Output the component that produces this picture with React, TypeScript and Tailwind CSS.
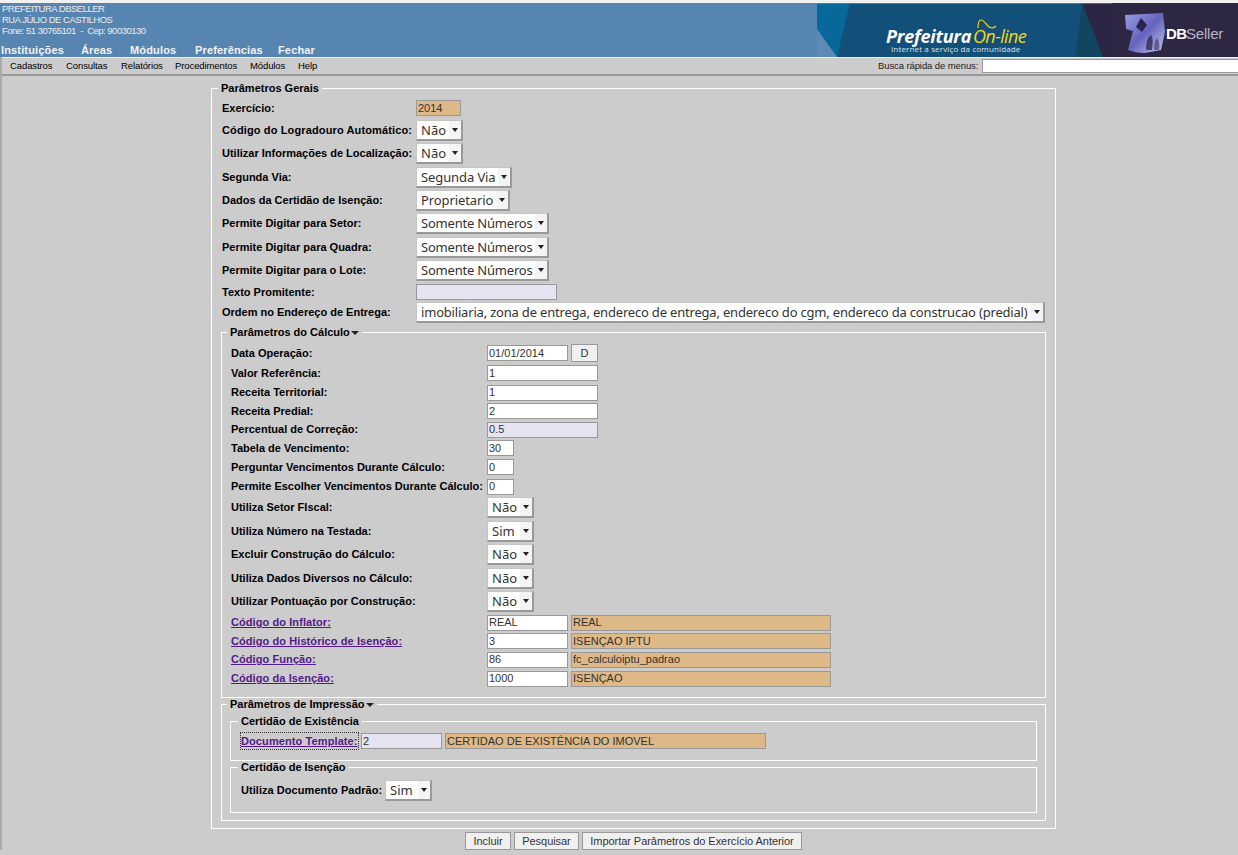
import type { ReactNode } from "react";

const sans = "font-['Liberation_Sans',Arial,sans-serif]";

function Arrow() {
  return (
    <span className="pointer-events-none absolute inset-y-0 right-0 flex w-[12px] items-center justify-center bg-[#f4f4f4]">
      <svg width="6" height="4" viewBox="0 0 6 4">
        <path d="M0 0h6L3 4z" fill="#222" />
      </svg>
    </span>
  );
}

function Select({ value, width, track = "" }: { value: string; width: string; track?: string }) {
  return (
    <span className={`relative inline-block h-[21px] ${width} border-t border-l border-[#c4c4c4] border-r-2 border-b-2 border-r-[#999] border-b-[#999] bg-white`}>
      <select
        defaultValue={value}
        className={`block h-full w-full appearance-none bg-white pl-1 font-['Noto_Sans',sans-serif] text-[13px] leading-[19px] text-[#333] outline-none ${track}`}
      >
        <option>{value}</option>
      </select>
      <Arrow />
    </span>
  );
}

function Input({ value = "", width, tone = "white" }: { value?: string; width: string; tone?: "white" | "lilac" | "tan" }) {
  const bg = tone === "white" ? "bg-white" : tone === "lilac" ? "bg-[#e6e4f1]" : "bg-[#deb887]";
  return (
    <input
      readOnly
      value={value}
      className={`block h-[16px] ${width} border border-[#999] ${bg} px-px ${sans} text-[11px] text-[#333] outline-none`}
    />
  );
}

function Row({ label, height, labelWidth, link, track = "", children }: { label: string; height: string; labelWidth: string; link?: boolean; track?: string; children: ReactNode }) {
  return (
    <div className={`flex items-center ${height}`}>
      <div className={`${labelWidth} shrink-0 text-[11px] font-bold ${track} ${link ? "tracking-[0.08px] text-[#551a8b] underline" : "text-black"}`}>{label}</div>
      <div className="flex items-center gap-[3px]">{children}</div>
    </div>
  );
}

function Legend({ children, caret, className }: { children: ReactNode; caret?: boolean; className: string }) {
  return (
    <legend className={`${className} px-[3px] text-[11px] leading-[13px] font-bold text-black`}>
      {children}
      {caret && (
        <svg width="8" height="4" viewBox="0 0 8 4" className="ml-px inline-block align-middle">
          <path d="M0 0h8L4 4z" fill="#222" />
        </svg>
      )}
    </legend>
  );
}

function Banner() {
  return (
    <svg width="421" height="54" viewBox="817 3 421 54" className="shrink-0">
      <defs>
        <linearGradient id="cube" x1="0" y1="0" x2="1" y2="1">
          <stop offset="0" stopColor="#9a9de2" />
          <stop offset="0.5" stopColor="#6464bc" />
          <stop offset="1" stopColor="#c5c8ee" />
        </linearGradient>
      </defs>
      <rect x="817" y="3" width="421" height="54" fill="#12507a" />
      <path d="M817 3h33l-13 54h-20z" fill="#06699a" />
      <path d="M817 29l20 28h-20z" fill="#5e8ab5" />
      <path d="M1082 3l21 54h-27z" fill="#124560" />
      <path d="M1082 3h156v54h-135z" fill="#2c2544" />
      <rect x="1112" y="3" width="126" height="54" fill="#2d2743" />
      <rect x="817" y="3" width="295" height="1" fill="#6a94bd" opacity="0.6" />
      <text x="886" y="43" fill="#fff" fontFamily="'Open Sans',sans-serif" fontSize="18" fontStyle="italic" fontWeight="700" letterSpacing="-0.2">Prefeitura</text>
      <text x="973" y="43" fill="#f2d70b" fontFamily="'Open Sans',sans-serif" fontSize="18" fontStyle="italic" fontWeight="400" letterSpacing="-0.6">On-line</text>
      <path d="M978 28c0-5 1-8 3-8 4 0 6 8 11 8 2 0 3-1 4-2" fill="none" stroke="#f2d70b" strokeWidth="1.2" />
      <text x="891" y="52" fill="#d6e4ec" fontFamily="'Open Sans',sans-serif" fontSize="8" letterSpacing="0.14">Internet a serviço da comunidade</text>
      <path d="M1125 15l38-2 2 19-4 18-16 3c-6 0-12-1-17-3l5-19-7-2z" fill="url(#cube)" />
      <path d="M1141 18l6 7-5 7-6-5z" fill="#2c2350" />
      <path d="M1146 50c0-8 2-13 5-15 2 2 2 8 1 15z" fill="#2c2350" opacity="0.75" />
      <path d="M1154 50c0-6 1-10 3-12 2 3 3 8 2 12z" fill="#2c2350" opacity="0.55" />
      <text x="1166" y="39" fill="#fff" fontFamily="'Liberation Sans',sans-serif" fontSize="15" fontWeight="700" letterSpacing="-0.5">DB</text>
      <text x="1186" y="39" fill="#b4b4c6" fontFamily="'Liberation Sans',sans-serif" fontSize="15" letterSpacing="-0.2">Seller</text>
    </svg>
  );
}

const topMenu = [
  { label: "Instituições", cls: "w-[80px]" },
  { label: "Áreas", cls: "w-[49px]" },
  { label: "Módulos", cls: "w-[65px]" },
  { label: "Preferências", cls: "w-[83px]" },
  { label: "Fechar", cls: "w-[50px]" },
];

const subMenu = [
  { label: "Cadastros", cls: "w-[56px]" },
  { label: "Consultas", cls: "w-[55px]" },
  { label: "Relatórios", cls: "w-[54px]" },
  { label: "Procedimentos", cls: "w-[75px]" },
  { label: "Módulos", cls: "w-[48px]" },
  { label: "Help", cls: "w-[30px]" },
];

const outerSelects = [
  { label: "Código do Logradouro Automático:", h: "h-[22px]", value: "Não", w: "w-[47px]", track: "tracking-[0.13px]", selectTrack: "" },
  { label: "Utilizar Informações de Localização:", h: "h-[24px]", value: "Não", w: "w-[47px]", track: "", selectTrack: "" },
  { label: "Segunda Via:", h: "h-[24px]", value: "Segunda Via", w: "w-[96px]", track: "", selectTrack: "tracking-[-0.1px]" },
  { label: "Dados da Certidão de Isenção:", h: "h-[23px]", value: "Proprietario", w: "w-[94px]", track: "", selectTrack: "tracking-[-0.1px]" },
  { label: "Permite Digitar para Setor:", h: "h-[23px]", value: "Somente Números", w: "w-[133px]", track: "", selectTrack: "tracking-[-0.2px]" },
  { label: "Permite Digitar para Quadra:", h: "h-[24px]", value: "Somente Números", w: "w-[133px]", track: "", selectTrack: "tracking-[-0.2px]" },
  { label: "Permite Digitar para o Lote:", h: "h-[23px]", value: "Somente Números", w: "w-[133px]", track: "", selectTrack: "tracking-[-0.2px]" },
];

const innerSelects = [
  { label: "Utiliza Setor FIscal:", h: "h-[23px]", value: "Não" },
  { label: "Utiliza Número na Testada:", h: "h-[24px]", value: "Sim" },
  { label: "Excluir Construção do Cálculo:", h: "h-[23px]", value: "Não" },
  { label: "Utiliza Dados Diversos no Cálculo:", h: "h-[24px]", value: "Não" },
  { label: "Utilizar Pontuação por Construção:", h: "h-[23px]", value: "Não" },
];

const lookups = [
  { label: "Código do Inflator:", h: "h-[19px]", code: "REAL", text: "REAL" },
  { label: "Código do Histórico de Isenção:", h: "h-[18px]", code: "3", text: "ISENÇAO IPTU" },
  { label: "Código Função:", h: "h-[19px]", code: "86", text: "fc_calculoiptu_padrao" },
  { label: "Código da Isenção:", h: "h-[19px]", code: "1000", text: "ISENÇAO" },
];

export default function App() {
  const lw = "w-[256px]";
  return (
    <div className={`h-[855px] w-[1238px] overflow-hidden bg-[#cccccc] ${sans}`}>
      <div className="h-[3px] bg-[#f1f1f1]" />
      <header className="flex h-[54px] justify-between bg-[#5785b2]">
        <div className="flex flex-col pl-[2px]">
          <div className="text-[9.5px] leading-[11px] tracking-[-0.5px] whitespace-nowrap text-[#ececec]">
            <p>PREFEITURA DBSELLER</p>
            <p>RUA JÚLIO DE CASTILHOS</p>
            <p>Fone: 51 30765101 &nbsp;-&nbsp; Cep: 90030130</p>
          </div>
          <nav className="mt-[7px] -ml-px flex text-[11px] leading-[14px] font-bold tracking-[0.15px] text-[#f2f2f2]">
            {topMenu.map((item) => (
              <span key={item.label} className={item.cls}>{item.label}</span>
            ))}
          </nav>
        </div>
        <Banner />
      </header>

      <div className="border-l-2 border-[#aaa]">
        <div className="flex h-[19px] items-center justify-between overflow-hidden border-t border-b-2 border-t-[#eeeeee] border-b-[#999] pl-[8px] text-[9.5px] tracking-[-0.1px] text-black">
          <nav className="flex">
            {subMenu.map((item) => (
              <span key={item.label} className={item.cls}>{item.label}</span>
            ))}
          </nav>
          <div className="flex w-[360px] shrink-0 items-center gap-[4px]">
            <span className="shrink-0 text-[#222]">Busca rápida de menus:</span>
            <input readOnly className="h-[14px] flex-1 border border-r-0 border-[#999] bg-white outline-none" />
          </div>
        </div>

        <main className="ml-[209px] w-[845px]">
          <fieldset className="mt-[6px] border border-white pr-[9px] pb-[7px] pl-[9px]">
            <Legend className="-ml-[3px]">Parâmetros Gerais</Legend>
            <div className="pt-[2px] pl-px">
              <Row label="Exercício:" height="h-[22px]" labelWidth="w-[194px]">
                <Input value="2014" width="w-[45px]" tone="tan" />
              </Row>
              {outerSelects.map((s) => (
                <Row key={s.label} label={s.label} height={s.h} labelWidth="w-[194px]" track={s.track}>
                  <Select value={s.value} width={s.w} track={s.selectTrack} />
                </Row>
              ))}
              <Row label="Texto Promitente:" height="h-[20px]" labelWidth="w-[194px]">
                <Input width="w-[141px]" tone="lilac" />
              </Row>
              <Row label="Ordem no Endereço de Entrega:" height="h-[21px]" labelWidth="w-[194px]">
                <Select
                  value="imobiliaria, zona de entrega, endereco de entrega, endereco do cgm, endereco da construcao (predial)"
                  width="w-[629px]"
                  track="tracking-[-0.19px]"
                />
              </Row>
            </div>

            <fieldset className="mt-[3px] border border-white px-[9px] pb-[9px]">
              <Legend caret className="-ml-[4px]">Parâmetros do Cálculo</Legend>
              <div className="pt-[4px]">
                <Row label="Data Operação:" height="h-[20px]" labelWidth={lw}>
                  <Input value="01/01/2014" width="w-[81px]" />
                  <button className="h-[18px] w-[27px] border border-[#999] bg-[#f0f0f0] text-[11px] text-[#333]">D</button>
                </Row>
                <Row label="Valor Referência:" height="h-[20px]" labelWidth={lw}>
                  <Input value="1" width="w-[111px]" />
                </Row>
                <Row label="Receita Territorial:" height="h-[19px]" labelWidth={lw}>
                  <Input value="1" width="w-[111px]" />
                </Row>
                <Row label="Receita Predial:" height="h-[18px]" labelWidth={lw}>
                  <Input value="2" width="w-[111px]" />
                </Row>
                <Row label="Percentual de Correção:" height="h-[19px]" labelWidth={lw}>
                  <Input value="0.5" width="w-[111px]" tone="lilac" />
                </Row>
                <Row label="Tabela de Vencimento:" height="h-[18px]" labelWidth={lw}>
                  <Input value="30" width="w-[27px]" />
                </Row>
                <Row label="Perguntar Vencimentos Durante Cálculo:" height="h-[20px]" labelWidth={lw}>
                  <Input value="0" width="w-[27px]" />
                </Row>
                <Row label="Permite Escolher Vencimentos Durante Cálculo:" height="h-[19px]" labelWidth={lw}>
                  <Input value="0" width="w-[27px]" />
                </Row>
                {innerSelects.map((s) => (
                  <Row key={s.label} label={s.label} height={s.h} labelWidth={lw}>
                    <Select value={s.value} width="w-[47px]" />
                  </Row>
                ))}
                {lookups.map((l) => (
                  <Row key={l.label} link label={l.label} height={l.h} labelWidth={lw}>
                    <Input value={l.code} width="w-[81px]" />
                    <Input value={l.text} width="w-[260px]" tone="tan" />
                  </Row>
                ))}
              </div>
            </fieldset>

            <fieldset className="border border-white pr-[8px] pb-[7px] pl-[8px]">
              <Legend caret className="-ml-[3px]">Parâmetros de Impressão</Legend>
              <fieldset className="mt-[4px] border border-white pr-[9px] pb-[9px] pl-[10px]">
                <Legend className="-ml-[3px]">Certidão de Existência</Legend>
                <div className="mt-[3px] flex h-[20px] items-center gap-[3px]">
                  <span className="w-[117px] shrink-0 text-[11px] font-bold tracking-[0.1px] whitespace-nowrap text-[#551a8b] underline outline-1 outline-[#333] outline-dotted">Documento Template:</span>
                  <Input value="2" width="w-[81px]" tone="lilac" />
                  <Input value="CERTIDAO DE EXISTÊNCIA DO IMOVEL" width="w-[321px]" tone="tan" />
                </div>
              </fieldset>
              <fieldset className="border border-white pr-[9px] pb-[10px] pl-[10px]">
                <Legend className="-ml-[3px]">Certidão de Isenção</Legend>
                <div className="mt-[4px] flex h-[24px] items-center gap-[3px]">
                  <span className="w-[141px] shrink-0 text-[11px] font-bold tracking-[0.05px] whitespace-nowrap text-black">Utiliza Documento Padrão:</span>
                  <Select value="Sim" width="w-[47px]" />
                </div>
              </fieldset>
            </fieldset>
          </fieldset>

          <div className="mt-[3px] flex justify-center gap-[3px] text-[11px] tracking-[-0.05px] text-[#333]">
            <button className="h-[18px] w-[46px] border border-[#999] bg-[#f0f0f0]">Incluir</button>
            <button className="h-[18px] w-[65px] border border-[#999] bg-[#f0f0f0]">Pesquisar</button>
            <button className="h-[18px] w-[220px] border border-[#999] bg-[#f0f0f0]">Importar Parâmetros do Exercício Anterior</button>
          </div>
        </main>
      </div>
    </div>
  );
}
